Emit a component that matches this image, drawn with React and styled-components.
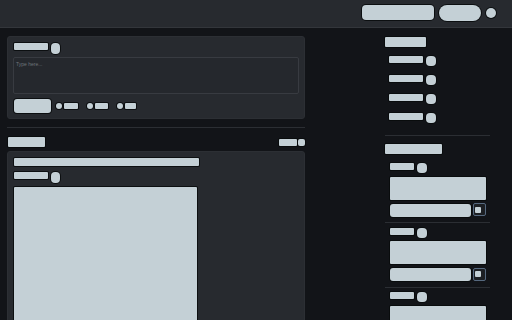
import React from "react";
import styled, { createGlobalStyle } from "styled-components";

const Global = createGlobalStyle`
  html, body { margin: 0; padding: 0; background: #121418; }
  body { font-family: "Liberation Sans", Arial, sans-serif; }
  ::-webkit-scrollbar { width: 3px; }
  ::-webkit-scrollbar-track { background: #1a1d21; }
  ::-webkit-scrollbar-thumb { background: #34383d; }
  * { box-sizing: border-box; }
`;

const LIGHT = "#c4d0d6";

const Block = styled.div`
  width: ${(p) => p.$w - 1}px;
  height: ${(p) => p.$h - 1}px;
  margin: 0.5px;
  background: ${LIGHT};
  box-shadow: 0 0 0 1px rgba(8, 10, 12, 0.85);
  border-radius: ${(p) => p.$r ?? 1}px;
  flex: none;
`;

const Header = styled.header`
  height: 28px;
  background: #272a2f;
  border-bottom: 1px solid #33363b;
  display: flex;
  align-items: center;
  justify-content: flex-end;
  gap: 4px;
  padding: 0 16px 2px 0;
`;

const Main = styled.main`
  display: grid;
  grid-template-columns: 298px 106px;
  column-gap: 79px;
  padding: 8px 0 40px 7px;
  align-items: start;
`;

const LeftCol = styled.section`
  display: flex;
  flex-direction: column;
`;

const Card = styled.div`
  background: #272a2f;
  border: 1px solid #2c2f34;
  border-radius: 3px;
  padding: 5px;
  display: flex;
  flex-direction: column;
  align-items: flex-start;
`;

const LabelRow = styled.div`
  display: flex;
  align-items: flex-start;
  gap: ${(p) => p.$gap ?? 2}px;
  margin-left: ${(p) => p.$indent ?? 0}px;
`;

const TextArea = styled.div`
  align-self: stretch;
  margin-top: 3px;
  height: 37px;
  border: 1px solid #383b41;
  border-radius: 2px;
  background: #25282d;
  padding: 3px 2px;
  font-size: 5px;
  color: #6f747b;
  line-height: 6px;
`;

const ActionRow = styled.div`
  margin-top: 4px;
  display: flex;
  align-items: center;
  gap: 4px;
`;

const Radio = styled.div`
  display: flex;
  align-items: center;
  gap: 1px;
  margin-right: 4px;
`;

const Divider = styled.div`
  height: 1px;
  background: #2b2e33;
  margin: ${(p) => p.$m || "8px 0 0 0"};
`;

const SectionHead = styled.div`
  margin-top: 8px;
  display: flex;
  justify-content: space-between;
  align-items: flex-start;
`;

const HeadTools = styled.div`
  display: flex;
  gap: 0;
  margin-top: 2px;
`;

const Card2 = styled(Card)`
  margin-top: 4px;
  height: 220px;
`;

const Stack = styled.div`
  display: flex;
  flex-direction: column;
  gap: ${(p) => p.$gap}px;
  margin-top: ${(p) => p.$mt ?? 0}px;
`;

const RightCol = styled.aside`
  display: flex;
  flex-direction: column;
  align-items: stretch;
`;

const Group = styled.div`
  display: flex;
  flex-direction: column;
  margin-left: 5px;
  width: 97px;
`;

const InputRow = styled.div`
  margin-top: 3px;
  display: flex;
  gap: 2px;
`;

const SqButton = styled.div`
  width: 13px;
  height: 13px;
  border: 1px solid #56697f;
  border-radius: 2px;
  background: #1c1f23;
  display: flex;
  align-items: center;
  padding-left: 1px;
  &::before {
    content: "";
    width: 6px;
    height: 6px;
    background: ${LIGHT};
    border-radius: 1px;
  }
`;

function Field({ last }) {
  return (
    <>
      <Group>
        <LabelRow>
          <Block $w={25} $h={8} />
          <Block $w={11} $h={11} $r={4} />
        </LabelRow>
        <Block $w={97} $h={24} style={{ marginTop: 3 }} />
        <InputRow>
          <Block $w={82} $h={14} $r={3} />
          <SqButton />
        </InputRow>
      </Group>
      {!last && <Divider $m="5px 0 4px 1px" />}
    </>
  );
}

export default function App() {
  return (
    <>
      <Global />
      <Header>
        <Block $w={73} $h={16} $r={4} />
        <Block $w={43} $h={17} $r={8} />
        <Block $w={11} $h={11} $r={6} />
      </Header>
      <Main>
        <LeftCol>
          <Card>
            <LabelRow>
              <Block $w={35} $h={8} />
              <Block $w={10} $h={12} $r={4} />
            </LabelRow>
            <TextArea>Type here...</TextArea>
            <ActionRow>
              <Block $w={38} $h={15} $r={3} />
              <Radio>
                <Block $w={7} $h={7} $r={4} />
                <Block $w={15} $h={7} />
              </Radio>
              <Radio>
                <Block $w={7} $h={7} $r={4} />
                <Block $w={14} $h={7} />
              </Radio>
              <Radio>
                <Block $w={7} $h={7} $r={4} />
                <Block $w={12} $h={7} />
              </Radio>
            </ActionRow>
          </Card>
          <Divider />
          <SectionHead>
            <Block $w={38} $h={11} />
            <HeadTools>
              <Block $w={19} $h={8} />
              <Block $w={8} $h={8} $r={2} />
            </HeadTools>
          </SectionHead>
          <Card2>
            <Block $w={186} $h={9} />
            <LabelRow style={{ marginTop: 5 }}>
              <Block $w={35} $h={8} />
              <Block $w={10} $h={12} $r={4} />
            </LabelRow>
            <Block $w={184} $h={200} style={{ marginTop: 4 }} />
          </Card2>
        </LeftCol>
        <RightCol>
          <Block $w={42} $h={11} />
          <Stack $gap={8} $mt={8}>
            {[0, 1, 2, 3].map((i) => (
              <LabelRow key={i} $indent={4}>
                <Block $w={35} $h={8} />
                <Block $w={11} $h={11} $r={4} />
              </LabelRow>
            ))}
          </Stack>
          <Divider $m="12px 0 0 1px" />
          <Block $w={58} $h={11} style={{ marginTop: 8 }} />
          <Stack $gap={0} $mt={8}>
            <Field />
            <Field />
            <Field last />
          </Stack>
        </RightCol>
      </Main>
    </>
  );
}
